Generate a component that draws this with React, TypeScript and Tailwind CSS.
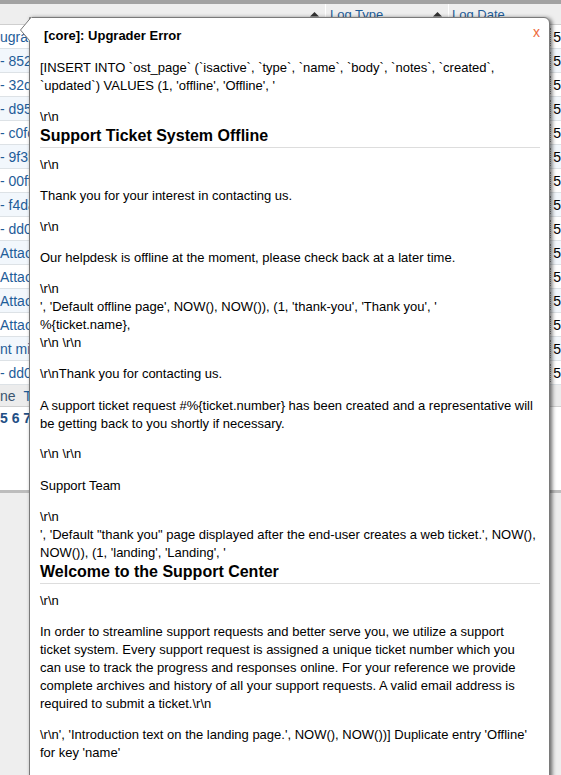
import React from "react";

const rows = [
  "ugrader",
  "- 852d",
  "- 32de",
  "- d959",
  "- c0fc",
  "- 9f3b",
  "- 00ff",
  "- f4da",
  "- dd0c",
  "Attach",
  "Attach",
  "Attach",
  "Attach",
  "nt mig",
  "- dd0c",
];

function SortIcon() {
  return (
    <svg width="9" height="7" viewBox="0 0 9 7" className="block">
      <polygon points="4.5,0 9,4.5 0,4.5" fill="#333" />
      <rect x="0" y="5.5" width="9" height="1.5" fill="#333" />
    </svg>
  );
}

const RN = "\\r\\n";

export default function App() {
  return (
    <div
      className="relative w-[561px] h-[775px] overflow-hidden bg-[#eeeeee] text-[13px] leading-[18px] text-black"
      style={{ fontFamily: '"Liberation Sans", Arial, sans-serif' }}
    >
      {/* background page */}
      <div className="h-[4px] bg-[#a2a2a2]" />
      <div className="bg-white">
        {/* header row */}
        <div className="flex h-[21px] bg-[#eeeeee] border-b border-[#cfcfcf]">
          <div className="w-[326px] flex items-start justify-end pr-[6px] pt-[8px] border-r border-white">
            <SortIcon />
          </div>
          <div className="w-[123px] flex items-start justify-between pl-[4px] pr-[6px] pt-[2px] border-r border-white">
            <span className="text-[#1f5d99] underline">Log Type</span>
            <span className="pt-[6px]">
              <SortIcon />
            </span>
          </div>
          <div className="w-[104px] pl-[3px] pt-[2px]">
            <span className="text-[#1f5d99] underline">Log Date</span>
          </div>
          <div className="flex-1" />
        </div>
        {rows.map((r, i) => (
          <div
            key={i}
            className={`flex h-[24px] items-center border-b border-[#dde2e6] ${
              i % 2 === 1 ? "bg-[#f2f7fc]" : "bg-white"
            }`}
          >
            <div className="w-[553px] whitespace-nowrap text-[#1f5d99] text-[14px]">{r}</div>
            <div className="flex-1 border-l border-dotted border-[#999] pl-[2px] text-[14px] text-black">5</div>
          </div>
        ))}
        <div className="flex h-[22px] items-center bg-[#ececec] border-b border-[#d0d0d0] text-[14px]">
          <span className="text-[#3b5570]">ne</span>
          <span className="ml-[8px] text-[#1f5d99]">T</span>
        </div>
        <div className="h-[83px] pt-[2px]">
          <span className="font-bold text-[14px] text-[#1f4f85]">5 6 7</span>
        </div>
      </div>
      <div className="h-[3px] bg-[#bdbdbd]" />

      {/* modal */}
      <div className="absolute left-[29px] top-[17px] w-[521px] h-[800px] bg-white border border-[#7a7a7a] rounded-tr-[6px] shadow-[2px_1px_4px_rgba(0,0,0,0.6)]">
        <svg
          width="14"
          height="25"
          viewBox="0 0 14 25"
          className="absolute left-[-12px] top-[-1px]"
        >
          <polygon points="13,0.5 2.5,13 11.5,23.5 14,23.5 14,0.5" fill="#fff" />
          <polyline points="13,0.5 2.5,13 11.5,23.5" fill="none" stroke="#7a7a7a" strokeWidth="1" />
        </svg>
        <span className="absolute right-[9px] top-[5px] text-[14px] text-[#ee6a3c]">x</span>

        <div className="pl-[10px] pr-[9px] pt-[9px]">
          <div className="pl-[4px] font-bold">[core]: Upgrader Error</div>

          <div className="mt-[14px] whitespace-nowrap">
            [INSERT INTO `ost_page` (`isactive`, `type`, `name`, `body`, `notes`, `created`,
            <br />
            `updated`) VALUES (1, 'offline', 'Offline', '
          </div>
          <div className="mt-[13px]">{RN}</div>
          <h1 className="text-[16px] font-bold leading-[19px] pb-[2px] border-b border-[#dddddd]">
            Support Ticket System Offline
          </h1>
          <div className="mt-[8px]">{RN}</div>
          <div className="mt-[13px]">Thank you for your interest in contacting us.</div>
          <div className="mt-[13px]">{RN}</div>
          <div className="mt-[13px]">
            Our helpdesk is offline at the moment, please check back at a later time.
          </div>
          <div className="mt-[13px] whitespace-nowrap">
            {RN}
            <br />
            ', 'Default offline page', NOW(), NOW()), (1, 'thank-you', 'Thank you', '
            <br />
            %{"{"}ticket.name{"}"},
            <br />
            {RN} {RN}
          </div>
          <div className="mt-[13px]">{RN}Thank you for contacting us.</div>
          <div className="mt-[14px] whitespace-nowrap">
            A support ticket request #%{"{"}ticket.number{"}"} has been created and a representative will
            <br />
            be getting back to you shortly if necessary.
          </div>
          <div className="mt-[12px]">
            {RN} {RN}
          </div>
          <div className="mt-[14px]">Support Team</div>
          <div className="mt-[13px] whitespace-nowrap">
            {RN}
            <br />
            ', 'Default "thank you" page displayed after the end-user creates a web ticket.', NOW(),
            <br />
            NOW()), (1, 'landing', 'Landing', '
          </div>
          <h1 className="text-[16px] font-bold leading-[19px] pb-[2px] border-b border-[#dddddd]">
            Welcome to the Support Center
          </h1>
          <div className="mt-[8px]">{RN}</div>
          <div className="mt-[13px] whitespace-nowrap">
            In order to streamline support requests and better serve you, we utilize a support
            <br />
            ticket system. Every support request is assigned a unique ticket number which you
            <br />
            can use to track the progress and responses online. For your reference we provide
            <br />
            complete archives and history of all your support requests. A valid email address is
            <br />
            required to submit a ticket.{RN}
          </div>
          <div className="mt-[13px] whitespace-nowrap">
            {RN}', 'Introduction text on the landing page.', NOW(), NOW())] Duplicate entry 'Offline'
            <br />
            for key 'name'
          </div>
        </div>
      </div>
    </div>
  );
}
